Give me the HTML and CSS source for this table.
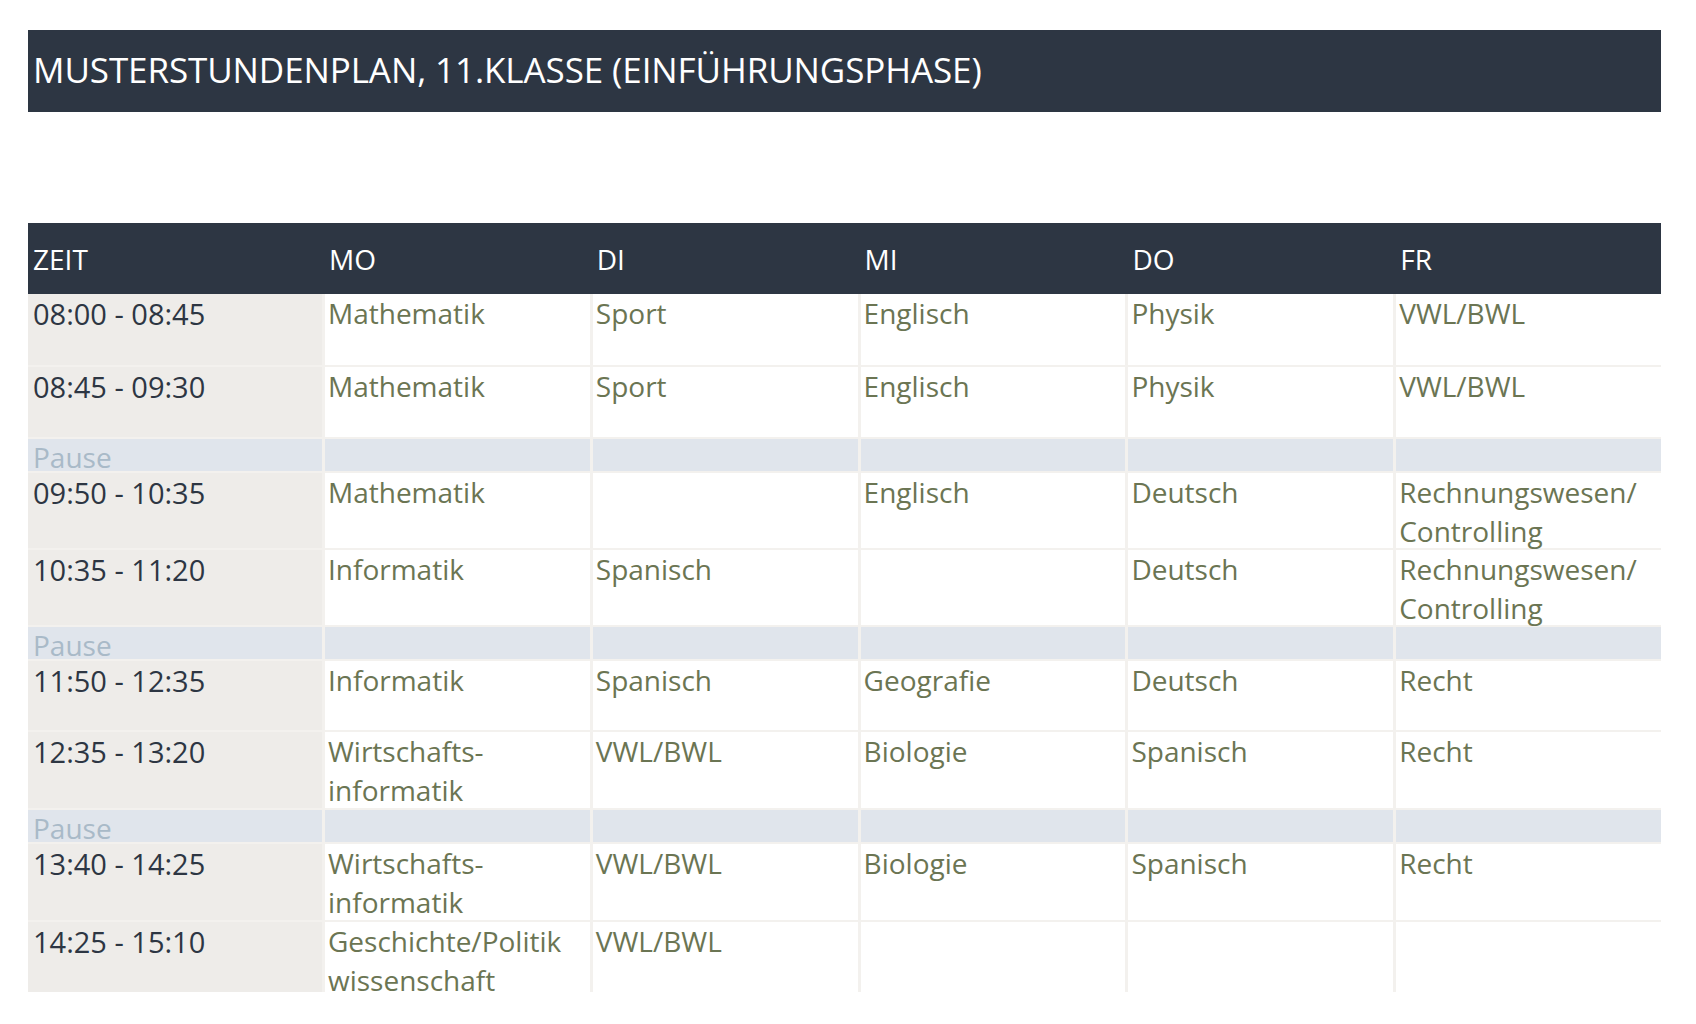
FILE: index.html
```html
<!DOCTYPE html>
<html lang="de">
<head>
<meta charset="utf-8">
<title>Musterstundenplan</title>
<link rel="stylesheet" href="styles.css">
</head>
<body>
<div class="page">
  <h1 class="title">MUSTERSTUNDENPLAN, 11.KLASSE (EINFÜHRUNGSPHASE)</h1>
  <div class="schedule">
    <div class="thead">
      <div class="th">ZEIT</div>
      <div class="th">MO</div>
      <div class="th">DI</div>
      <div class="th">MI</div>
      <div class="th">DO</div>
      <div class="th">FR</div>
    </div>
    <div class="tbody">
      <div class="time">08:00 - 08:45</div>
      <div class="cell">Mathematik</div>
      <div class="cell">Sport</div>
      <div class="cell">Englisch</div>
      <div class="cell">Physik</div>
      <div class="cell">VWL/BWL</div>

      <div class="time">08:45 - 09:30</div>
      <div class="cell">Mathematik</div>
      <div class="cell">Sport</div>
      <div class="cell">Englisch</div>
      <div class="cell">Physik</div>
      <div class="cell">VWL/BWL</div>

      <div class="pause label">Pause</div>
      <div class="pause"></div>
      <div class="pause"></div>
      <div class="pause"></div>
      <div class="pause"></div>
      <div class="pause"></div>

      <div class="time">09:50 - 10:35</div>
      <div class="cell">Mathematik</div>
      <div class="cell"></div>
      <div class="cell">Englisch</div>
      <div class="cell">Deutsch</div>
      <div class="cell">Rechnungswesen/<br>Controlling</div>

      <div class="time">10:35 - 11:20</div>
      <div class="cell">Informatik</div>
      <div class="cell">Spanisch</div>
      <div class="cell"></div>
      <div class="cell">Deutsch</div>
      <div class="cell">Rechnungswesen/<br>Controlling</div>

      <div class="pause label">Pause</div>
      <div class="pause"></div>
      <div class="pause"></div>
      <div class="pause"></div>
      <div class="pause"></div>
      <div class="pause"></div>

      <div class="time">11:50 - 12:35</div>
      <div class="cell">Informatik</div>
      <div class="cell">Spanisch</div>
      <div class="cell">Geografie</div>
      <div class="cell">Deutsch</div>
      <div class="cell">Recht</div>

      <div class="time">12:35 - 13:20</div>
      <div class="cell">Wirtschafts-<br>informatik</div>
      <div class="cell">VWL/BWL</div>
      <div class="cell">Biologie</div>
      <div class="cell">Spanisch</div>
      <div class="cell">Recht</div>

      <div class="pause label">Pause</div>
      <div class="pause"></div>
      <div class="pause"></div>
      <div class="pause"></div>
      <div class="pause"></div>
      <div class="pause"></div>

      <div class="time">13:40 - 14:25</div>
      <div class="cell">Wirtschafts-<br>informatik</div>
      <div class="cell">VWL/BWL</div>
      <div class="cell">Biologie</div>
      <div class="cell">Spanisch</div>
      <div class="cell">Recht</div>

      <div class="time">14:25 - 15:10</div>
      <div class="cell">Geschichte/Politik<br>wissenschaft</div>
      <div class="cell">VWL/BWL</div>
      <div class="cell"></div>
      <div class="cell"></div>
      <div class="cell"></div>
    </div>
  </div>
</div>
</body>
</html>
```

FILE: styles.css
```css
* {
  box-sizing: border-box;
}

html, body {
  margin: 0;
  padding: 0;
  background: #ffffff;
}

body {
  font-family: "Open Sans", "DejaVu Sans", sans-serif;
}

.page {
  padding: 30px 35px 0 28px;
  display: flex;
  flex-direction: column;
  gap: 111px;
}

.title {
  margin: 0;
  height: 82px;
  padding: 20px 0 0 5px;
  background: #2d3643;
  color: #ffffff;
  font-weight: 400;
  font-size: 35px;
  line-height: 40px;
  letter-spacing: -0.1px;
  white-space: nowrap;
}

.schedule {
  display: flex;
  flex-direction: column;
  font-size: 28px;
  line-height: 39px;
}

.thead {
  display: grid;
  grid-template-columns: 294px repeat(5, 1fr);
  column-gap: 3px;
  height: 71px;
  background: #2d3643;
  color: #ffffff;
}

.th {
  padding: 17px 0 0 4px;
}

.th:first-child {
  padding-left: 5px;
}

.tbody {
  display: grid;
  grid-template-columns: 294px repeat(5, 1fr);
  grid-template-rows: 71px 70px 32px 75px 75px 32px 69px 76px 32px 76px 70px;
  column-gap: 3px;
  row-gap: 2px;
  background: #f3f1ee;
}

.time {
  background: #eeece9;
  color: #2d3643;
  padding: 0 0 0 5px;
  font-size: 29px;
}

.cell {
  background: #ffffff;
  color: #6b7553;
  padding: 0 0 0 3px;
}

.pause {
  background: #e0e5ec;
}

.pause.label {
  color: #a9bac8;
  padding-left: 5px;
  line-height: 37px;
}
```
